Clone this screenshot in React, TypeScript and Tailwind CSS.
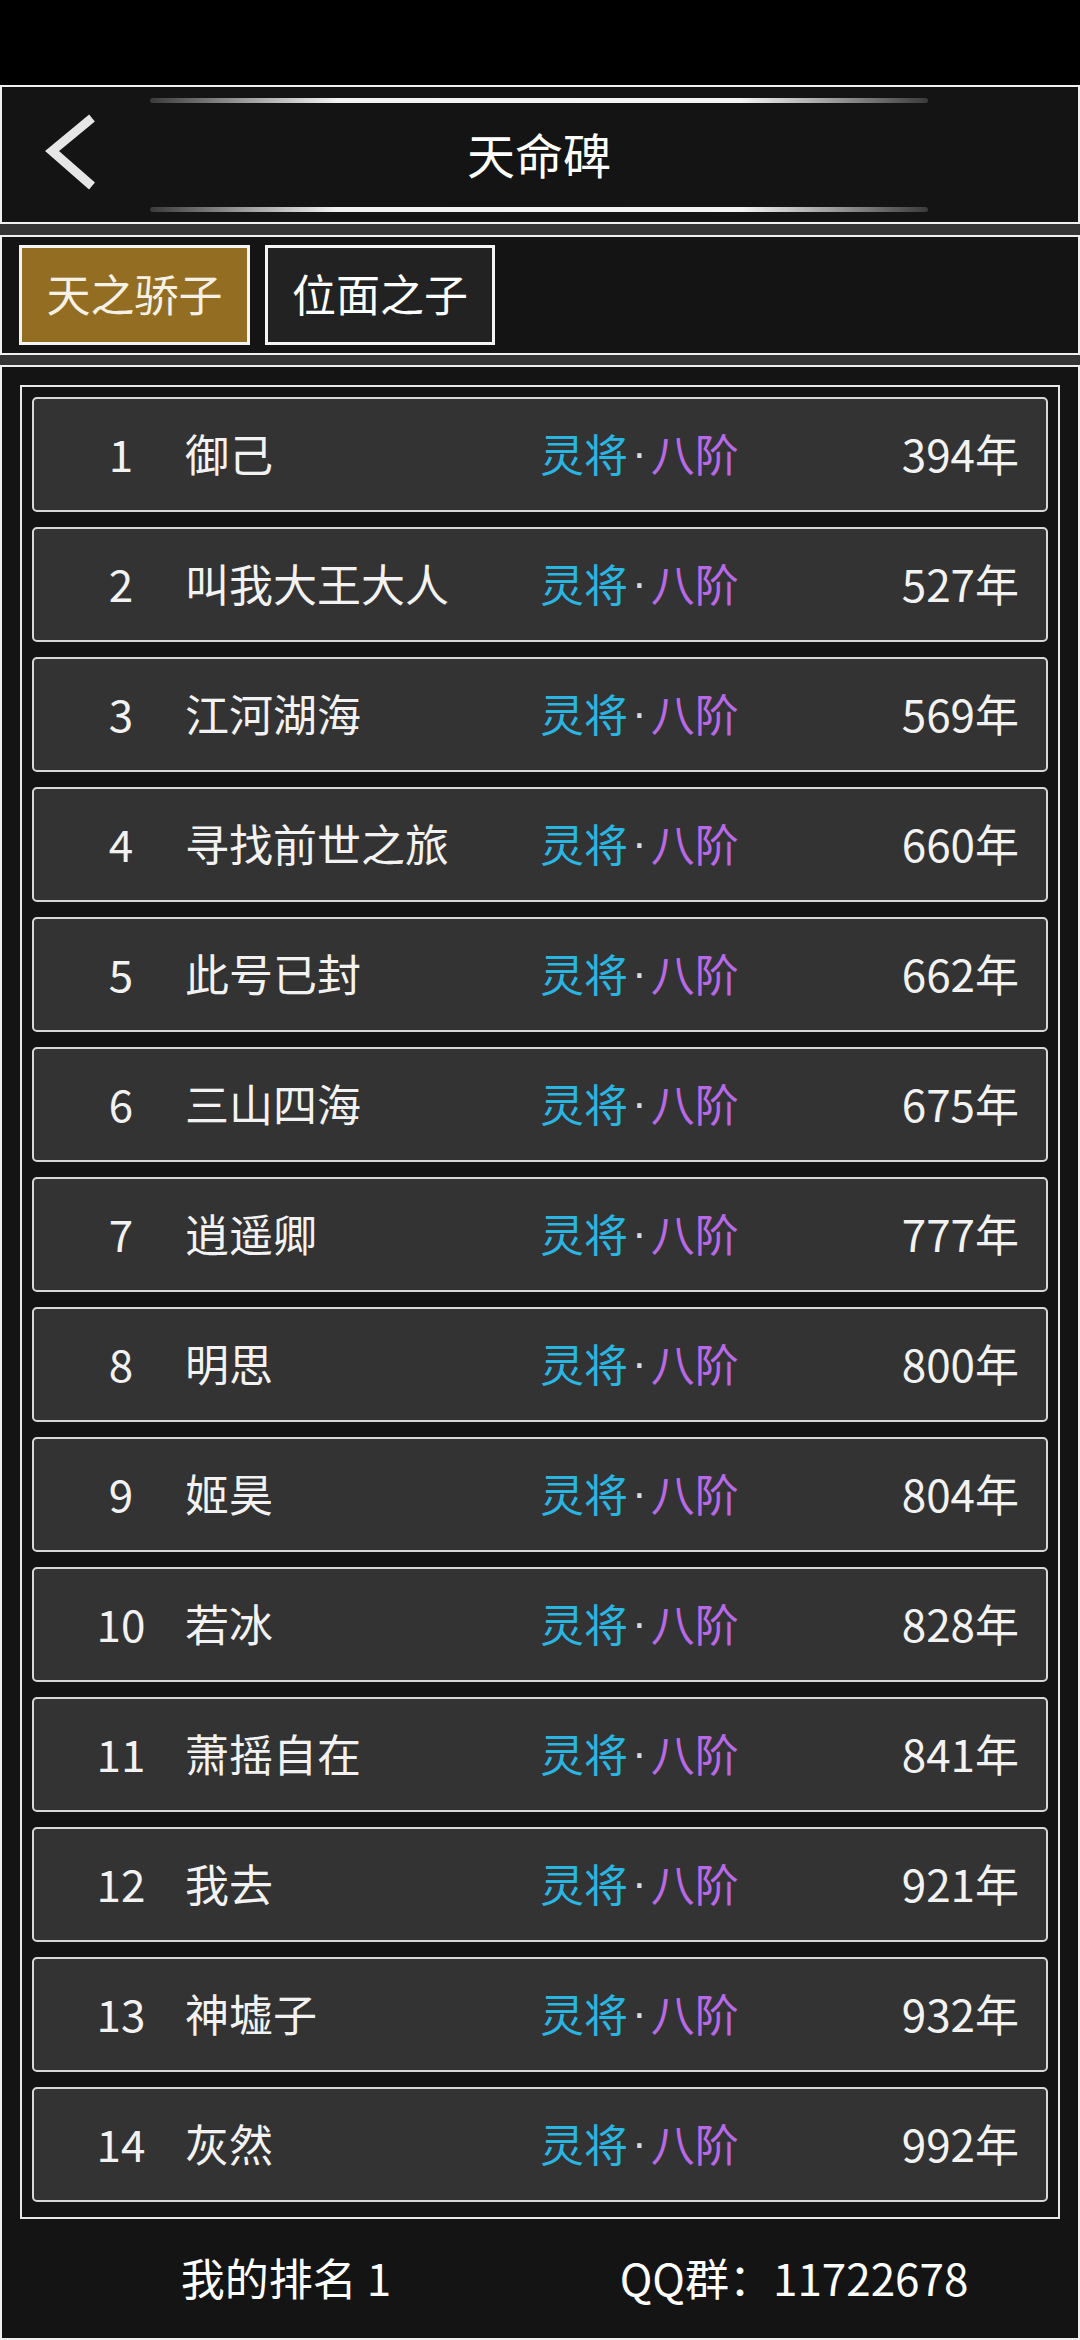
const players = [
  { rank: 1, name: '御己', years: 394 },
  { rank: 2, name: '叫我大王大人', years: 527 },
  { rank: 3, name: '江河湖海', years: 569 },
  { rank: 4, name: '寻找前世之旅', years: 660 },
  { rank: 5, name: '此号已封', years: 662 },
  { rank: 6, name: '三山四海', years: 675 },
  { rank: 7, name: '逍遥卿', years: 777 },
  { rank: 8, name: '明思', years: 800 },
  { rank: 9, name: '姬昊', years: 804 },
  { rank: 10, name: '若冰', years: 828 },
  { rank: 11, name: '萧摇自在', years: 841 },
  { rank: 12, name: '我去', years: 921 },
  { rank: 13, name: '神墟子', years: 932 },
  { rank: 14, name: '灰然', years: 992 },
];

const font = { fontFamily: '"Noto Sans CJK SC", "Noto Sans", sans-serif' };

function GlowLine() {
  return (
    <div className="h-[5px] w-full rounded-full bg-[linear-gradient(90deg,#3a3a3a_0%,#9a9a9a_12%,#f2f2f2_24%,#f4f4f4_76%,#9a9a9a_88%,#3a3a3a_100%)]" />
  );
}

function Row({ rank, name, years }: { rank: number; name: string; years: number }) {
  return (
    <div className="flex h-[115px] items-center rounded-[5px] border-2 border-[#d8d8d8] bg-[#333333] pb-[3px] text-[44px] leading-none text-[#f2f2f2]">
      <div className="ml-[37px] w-[100px] text-center">{rank}</div>
      <div className="ml-[14px] w-[355px]">{name}</div>
      <div className="flex items-center whitespace-nowrap">
        <span className="text-[#29b6e2]">灵将</span>
        <span className="px-[4px] font-['Liberation_Sans'] text-[#dcdcdc]">·</span>
        <span className="text-[#b86ae6]">八阶</span>
      </div>
      <div className="flex-1 pr-[27px] text-right">{years}年</div>
    </div>
  );
}

export default function App() {
  return (
    <div className="flex min-h-[2340px] w-[1080px] flex-col bg-[#353535]" style={font}>
      <div className="h-[85px] bg-black" />

      {/* title bar */}
      <div className="flex h-[139px] border-2 border-[#f0f0f0] bg-[#141414]">
        <div className="flex w-[148px] items-center pl-[40px]">
          <svg width="60" height="80" viewBox="0 0 60 80" className="-mt-[2px]">
            <polyline
              points="50,4 10,37 50,72"
              fill="none"
              stroke="#e6e6e6"
              strokeWidth="9"
              strokeLinejoin="miter"
              strokeLinecap="butt"
            />
          </svg>
        </div>
        <div className="flex w-[778px] flex-col pt-[11px] pb-[10px]">
          <GlowLine />
          <div className="flex flex-1 items-center justify-center pb-[4px] text-[48px] leading-none text-white">天命碑</div>
          <GlowLine />
        </div>
      </div>

      {/* tabs */}
      <div className="mt-[11px] flex h-[120px] gap-[15px] border-2 border-[#f0f0f0] bg-[#141414] pl-[17px] pt-[8px]">
        <button className="flex h-[100px] w-[231px] items-center justify-center border-[3px] border-[#f4f4f4] bg-[#936e22] pb-[4px] text-[44px] leading-none text-[#f6f1e6]">
          天之骄子
        </button>
        <button className="flex h-[100px] w-[230px] items-center justify-center border-[3px] border-[#f4f4f4] bg-[#222222] pb-[4px] text-[44px] leading-none text-white">
          位面之子
        </button>
      </div>

      {/* ranking list */}
      <div className="mt-[10px] flex flex-1 flex-col border-2 border-[#f0f0f0] bg-[#141414]">
        <div className="mx-[18px] mt-[18px] flex flex-col gap-[15px] border-2 border-[#e8e8e8] bg-[#141414] px-[10px] pt-[10px] pb-[15px]">
          {players.map((p) => (
            <Row key={p.rank} {...p} />
          ))}
        </div>
        <div className="grid flex-1 grid-cols-2 items-center px-[30px] pb-[4px] text-[44px] leading-none text-white">
          <div className="text-center">我的排名 1</div>
          <div className="text-center">QQ群：11722678</div>
        </div>
      </div>
    </div>
  );
}
